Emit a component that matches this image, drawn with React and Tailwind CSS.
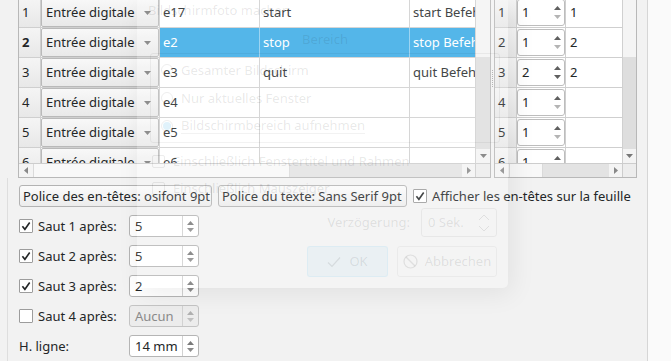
import React from 'react';

// Tiny filled triangle used by combos, spin boxes and scroll bars
function Tri({ dir = 'down', color = '#707070', size = 7 }) {
  const h = Math.ceil(size / 2);
  if (dir === 'down' || dir === 'up') {
    const pts = dir === 'down' ? `0,0 ${size},0 ${size / 2},${h}` : `0,${h} ${size},${h} ${size / 2},0`;
    return (
      <svg width={size} height={h} className="block">
        <polygon points={pts} fill={color} />
      </svg>
    );
  }
  const pts = dir === 'left' ? `${h},0 ${h},${size} 0,${size / 2}` : `0,0 0,${size} ${h},${size / 2}`;
  return (
    <svg width={h} height={size} className="block">
      <polygon points={pts} fill={color} />
    </svg>
  );
}

const Check = ({ color = '#232627' }) => (
  <svg width="10" height="10" viewBox="0 0 10 10" className="block">
    <path d="M1.4 5.2 L3.9 8.3 L8.7 1.5" fill="none" stroke={color} strokeWidth="1.6" />
  </svg>
);

const leftRows = [
  { n: 1, e: 'e17', f: 'start', g: 'start Befehl' },
  { n: 2, e: 'e2', f: 'stop', g: 'stop Befehl', sel: true },
  { n: 3, e: 'e3', f: 'quit', g: 'quit Befehl' },
  { n: 4, e: 'e4' },
  { n: 5, e: 'e5' },
  { n: 6, e: 'e6' },
];

const rightRows = [
  { n: 1, v: 1, x: '1' },
  { n: 2, v: 1, x: '2' },
  { n: 3, v: 2, x: '2' },
  { n: 4, v: 1 },
  { n: 5, v: 1 },
  { n: 6, v: 1 },
];

const RowHead = ({ n, bold }) => (
  <div className={`w-[22px] shrink-0 border-r border-[#cfcfcf] pl-[3px] flex items-center bg-linear-to-b from-[#f5f5f5] to-[#e8e8e8] ${bold ? 'font-bold' : ''}`}>
    {n}
  </div>
);

const Combo = () => (
  <div className="h-full flex items-center justify-between rounded-[2px] border border-[#b9b9b9] bg-linear-to-b from-[#f8f8f8] to-[#e9e9e9] pl-[4px] pr-[7px]">
    <span>Entrée digitale</span>
    <Tri dir="down" color="#7a7a7a" />
  </div>
);

const VScroll = ({ w }) => (
  <div className={`${w} shrink-0 border-l border-[#d0d0d0] flex flex-col`}>
    <div className="h-[57px] bg-[#f4f4f4]" />
    <div className="flex-1 bg-[#dedede]" />
    <div className="h-[14px] bg-[#f4f4f4] flex items-center justify-center">
      <Tri dir="down" color="#777" />
    </div>
  </div>
);

const HScroll = ({ thumb, track, corner }) => (
  <div className="h-[14px] shrink-0 border-t border-[#cdcdcd] flex bg-[#f4f4f4]">
    <div className="w-[14px] flex items-center justify-center">
      <Tri dir="left" color="#888" />
    </div>
    <div className={`${thumb} bg-[#f8f8f8] border-x border-[#dadada]`} />
    <div className={`${track} bg-[#e3e3e3]`} />
    <div className="w-[13px] flex items-center justify-center">
      <Tri dir="right" color="#888" />
    </div>
    <div className={`${corner} border-l border-[#cdcdcd] bg-[#ededed]`} />
  </div>
);

function LeftTable() {
  return (
    <div className="w-[473px] h-full shrink-0 border-x border-b border-[#b8b8b8] flex flex-col bg-white">
      <div className="flex-1 flex min-h-0">
        <div className="flex-1 overflow-hidden">
          <div className="-mt-[2px]">
            {leftRows.map((r) => {
              const cell = r.sel ? 'bg-[#37aae6] text-white border-[#8ccdf0]' : 'border-[#cfcfcf]';
              return (
                <div key={r.n} className="flex h-[30px] border-b border-[#cfcfcf]">
                  <RowHead n={r.n} bold={r.sel} />
                  <div className="w-[119px] shrink-0 border-r border-[#cfcfcf]">
                    <Combo />
                  </div>
                  <div className={`w-[100px] shrink-0 border-r pl-[3px] flex items-center ${cell}`}>{r.e}</div>
                  <div className={`w-[150px] shrink-0 border-r pl-[3px] flex items-center ${cell}`}>{r.f}</div>
                  <div className={`flex-1 pl-[3px] flex items-center whitespace-nowrap overflow-hidden ${cell}`}>{r.g}</div>
                </div>
              );
            })}
          </div>
        </div>
        <VScroll w="w-[15px]" />
      </div>
      <HScroll thumb="w-[257px]" track="w-[172px]" corner="w-[15px]" />
    </div>
  );
}

const CellSpin = ({ v }) => (
  <div className="h-full flex rounded-[3px] border border-[#bdbdbd] bg-white">
    <div className="flex-1 pl-[4px] flex items-center">{v}</div>
    <div className="w-[14px] flex flex-col items-center justify-center gap-[5px]">
      <Tri dir="up" color="#5f5f5f" />
      <Tri dir="down" color={v > 1 ? '#5f5f5f' : '#b4b4b4'} />
    </div>
  </div>
);

function RightTable() {
  return (
    <div className="w-[143px] h-full shrink-0 border-x border-b border-[#b8b8b8] flex flex-col bg-white">
      <div className="flex-1 flex min-h-0">
        <div className="flex-1 overflow-hidden">
          <div className="-mt-[2px]">
            {rightRows.map((r) => (
              <div key={r.n} className="flex h-[30px] border-b border-[#cfcfcf]">
                <RowHead n={r.n} />
                <div className="w-[49px] shrink-0 border-r border-[#cfcfcf] py-[1px]">
                  <CellSpin v={r.v} />
                </div>
                <div className="flex-1 pl-[4px] flex items-center">{r.x}</div>
              </div>
            ))}
          </div>
        </div>
        <VScroll w="w-[14px]" />
      </div>
      <HScroll thumb="w-[34px]" track="w-[66px]" corner="w-[14px]" />
    </div>
  );
}

const Box = ({ checked }) => (
  <div className="w-[14px] h-[14px] shrink-0 border border-[#9c9c9c] rounded-[1px] bg-white flex items-center justify-center">
    {checked && <Check />}
  </div>
);

const Spin = ({ value, disabled }) => (
  <div className={`w-[70px] h-[22px] flex rounded-[3px] border ${disabled ? 'border-[#c4c4c4] bg-[#ececec] text-[#8a8a8a]' : 'border-[#b5b5b5] bg-white'}`}>
    <div className="flex-1 pl-[5px] flex items-center">{value}</div>
    <div className="w-[16px] border-l border-[#d2d2d2] flex flex-col items-center justify-center gap-[3px]">
      <Tri dir="up" color={disabled ? '#b0b0b0' : '#7a7a7a'} />
      <Tri dir="down" color={disabled ? '#c0c0c0' : '#8a8a8a'} />
    </div>
  </div>
);

const FormRow = ({ label, box, checked, value, disabled }) => (
  <div className="flex items-center h-[22px]">
    <div className="w-[110px] flex items-center gap-[5px]">
      {box && <Box checked={checked} />}
      <span>{label}</span>
    </div>
    <Spin value={value} disabled={disabled} />
  </div>
);

const Button = ({ w, children }) => (
  <div className={`${w} h-[22px] shrink-0 flex items-center pl-[3px] rounded-[3px] border border-[#b3b3b3] bg-linear-to-b from-[#fbfbfb] to-[#ececec] whitespace-nowrap`}>
    {children}
  </div>
);

const Radio = ({ on }) => (
  <div className="w-[12px] h-[12px] rounded-full border border-[rgba(0,0,0,0.07)] flex items-center justify-center">
    {on && <div className="w-[8px] h-[8px] rounded-full bg-[rgba(61,174,233,0.16)]" />}
  </div>
);

// Faded screenshot dialog lying over the window
function Overlay() {
  return (
    <div className="absolute left-[137px] top-0 w-[371px] h-[288px] bg-white/15 rounded-b-[5px] shadow-[4px_6px_26px_rgba(0,0,0,0.07)] text-[rgba(35,38,41,0.11)] pl-[11px] pt-[1px]">
      <div className="h-[18px] flex items-center">Bildschirmfoto machen</div>
      <div className="w-[350px] ml-[2px] mt-[11px] h-[18px] flex items-center justify-center">Bereich</div>
      <div className="w-[350px] ml-[2px] mt-[5px] h-[90px] rounded-[3px] border border-[rgba(0,0,0,0.05)] pt-[2px] pl-[10px]">
        <div className="h-[28px] flex items-center gap-[8px]">
          <Radio />
          <span>Gesamter Bildschirm</span>
        </div>
        <div className="h-[28px] flex items-center gap-[8px]">
          <Radio />
          <span>Nur aktuelles Fenster</span>
        </div>
        <div className="h-[28px] flex items-center gap-[8px]">
          <Radio on />
          <span className="pb-[1px] border-b border-[rgba(0,0,0,0.05)]">Bildschirmbereich aufnehmen</span>
        </div>
      </div>
      <div className="mt-[5px] ml-[4px]">
        <div className="h-[27px] flex items-center gap-[8px]">
          <div className="w-[13px] h-[13px] rounded-[2px] border border-[rgba(0,0,0,0.07)]" />
          <span>Einschließlich Fenstertitel und Rahmen</span>
        </div>
        <div className="h-[27px] flex items-center gap-[8px]">
          <div className="w-[13px] h-[13px] rounded-[2px] border border-[rgba(0,0,0,0.07)]" />
          <span>Einschließlich Mauszeiger</span>
        </div>
      </div>
      <div className="w-[349px] mt-[6px] h-[29px] flex items-center justify-end gap-[11px]">
        <span>Verzögerung:</span>
        <div className="w-[76px] h-full rounded-[3px] border border-[rgba(0,0,0,0.05)] flex items-center justify-between pl-[6px] pr-[6px]">
          <span>0 Sek.</span>
          <svg width="12" height="20" viewBox="0 0 12 20" className="block">
            <path d="M1 7 L6 2 L11 7 M1 13 L6 18 L11 13" fill="none" stroke="rgba(35,38,41,0.1)" strokeWidth="1" />
          </svg>
        </div>
      </div>
      <div className="w-[349px] mt-[9px] h-[31px] flex justify-end gap-[9px]">
        <div className="w-[81px] h-full rounded-[3px] border border-[rgba(61,174,233,0.08)] bg-[rgba(61,174,233,0.05)] flex items-center justify-center gap-[8px]">
          <svg width="14" height="12" viewBox="0 0 14 12" className="block">
            <path d="M1 6.5 L5 10.5 L13 1.5" fill="none" stroke="rgba(35,38,41,0.1)" strokeWidth="1.2" />
          </svg>
          <span>OK</span>
        </div>
        <div className="w-[100px] h-full rounded-[3px] border border-[rgba(0,0,0,0.04)] flex items-center justify-center gap-[7px]">
          <svg width="15" height="15" viewBox="0 0 15 15" className="block">
            <circle cx="7.5" cy="7.5" r="6.5" fill="none" stroke="rgba(35,38,41,0.1)" strokeWidth="1.2" />
            <path d="M3 3 L12 12" stroke="rgba(35,38,41,0.1)" strokeWidth="1.2" />
          </svg>
          <span>Abbrechen</span>
        </div>
      </div>
    </div>
  );
}

export default function App() {
  return (
    <div className="w-[671px] h-[361px] overflow-hidden relative flex bg-[#f2f2f2] font-['Noto_Sans',sans-serif] text-[13px] leading-none text-[#232627]">
      <div className="w-[647px] shrink-0 flex flex-col">
        {/* TABLES */}
        <div className="h-[178px] shrink-0 flex pl-[18px]">
          <LeftTable />
          <div className="w-[3px] shrink-0 flex justify-center pt-[70px]">
            <div className="w-0 h-[17px] border-l border-dotted border-[#a8a8a8]" />
          </div>
          <RightTable />
        </div>

        {/* OPTIONS */}
        <div className="flex-1 ml-[7px] border-l border-[#dedede] pl-[11px] pt-[7px] flex flex-col gap-[8px]">
          <div className="h-[22px] flex items-center gap-[6px]">
            <Button w="w-[193px]">Police des en-têtes: osifont 9pt</Button>
            <Button w="w-[189px]">Police du texte: Sans Serif 9pt</Button>
            <div className="flex items-center gap-[5px] whitespace-nowrap">
              <Box checked />
              <span>Afficher les en-têtes sur la feuille</span>
            </div>
          </div>
          <FormRow box checked label="Saut 1 après:" value="5" />
          <FormRow box checked label="Saut 2 après:" value="5" />
          <FormRow box checked label="Saut 3 après:" value="2" />
          <FormRow box label="Saut 4 après:" value="Aucun" disabled />
          <FormRow label="H. ligne:" value="14 mm" />
        </div>
      </div>
      <div className="w-px shrink-0 bg-[#d6d6d6]" />
      <div className="flex-1 bg-[#fafafa]" />

      <Overlay />
    </div>
  );
}
